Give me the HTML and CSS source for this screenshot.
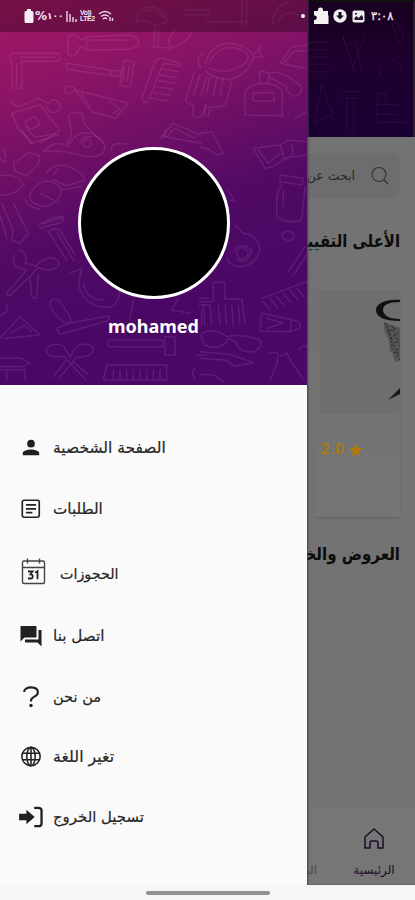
FILE: index.html
```html
<!DOCTYPE html>
<html lang="ar">
<head>
<meta charset="utf-8">
<meta name="viewport" content="width=device-width, initial-scale=1">
<title>mohamed</title>
<link rel="stylesheet" href="styles.css">
</head>
<body>
<div class="screen">
  <main class="page">
    <header class="page-header">
      <svg class="page-doodles" viewBox="0 0 324 402" fill="none" stroke="#a060c8" stroke-opacity=".12" stroke-width="3">
        <path d="M8 120h60M8 142h70M8 165h60M8 188h65M8 210h60M110 100l35 110M145 100l20 100M180 95l-45 110M110 100q10 50 30 15M260 60l20 60q20 10 15-20l-25-50M230 180q-20 40 10 60M250 170q30 0 40 40M45 250l35 90-55 20zM100 270h65M100 290h65M122 290v105M143 290v105M215 275v90h90M215 275h25v15h-20M215 310h60M215 340h60"/>
      </svg>
    </header>
    <div class="search">
      <svg class="search-icon" viewBox="0 0 20 20" fill="none" stroke="#303030" stroke-width="1.1"><circle cx="9" cy="8.5" r="7"/><path d="m14 14 4 4"/></svg>
      <span class="search-text">ابحث عن</span>
    </div>
    <h2 class="title">الأعلى التقييم</h2>
    <section class="card">
      <div class="photo">
        <svg viewBox="0 0 80 121" fill="none">
          <path d="M80 10C65 9 56 14 56 20c0 7 8 11 24 11v-2c-13 0-17-5-17-9 0-5 5-8 17-8z" fill="#111"/>
          <path d="M64 32l16 6v33l-5 1-2-7-3-4-1-11-5-10z" fill="#555"/>
          <path d="m65 33 14 33M68 35l4 22 8 13M72 36l7 20M67 42l9-4M70 49l9-7M72 56l8-8M74 63l6-6" stroke="#292929" stroke-dasharray="2 2"/>
          <path d="M80 98 68 110l12-6z" fill="#191919"/>
        </svg>
      </div>
      <div class="rating"><span>2.0</span><svg viewBox="0 0 24 24"><path fill="#b07b08" d="m12 1 3.400 7.300 8.100.9-6 5.400 1.700 7.900L12 18.500l-7.200 4 1.700-7.900-6-5.400 8.100-.9z"/></svg></div>
    </section>
    <h2 class="title title-offers">العروض والخصومات</h2>
    <nav class="tabs">
      <div class="tab">
        <svg viewBox="0 0 22 22" fill="none" stroke="#1c0c29" stroke-width="1.5" stroke-linejoin="round"><path d="M2 20V9l9-8 9 8v11h-5v-5q0-2-2-2H9q-2 0-2 2v5z"/></svg>
        <span class="tab-label">الرئيسية</span>
      </div>
      <div class="tab tab-next"><span class="tab-label">الطلبات</span></div>
    </nav>
  </main>

  <aside class="drawer">
    <div class="profile">
      <svg class="doodles" viewBox="0 0 921 1155" fill="none" stroke="#d28ae0" stroke-opacity=".15" stroke-width="4.500" stroke-linejoin="round" stroke-linecap="round">
        <g>
          <path d="M410 65q-5-45 45-45 35 3 45 45l-30 15q-25-25-60-15M430 35q40-20 60 20M555 30h75M555 45h75"/>
          <path d="M205 110q15-8 28 0l15 10 15-10 120-5q35 5 32 25-3 15-35 18l-115 3-25-12-12 25q-12 8-24 0zM260 112v36M270 120h115M465 85l-4 55 50 5q55-20 62-45M475 90v45M510 140q-10-35 20-50"/>
          <path d="M35 160h140q10 10 0 24H65v80H37v-75q-15-10-2-29M50 190v65M60 172h105"/>
          <path d="m200 190 130 20q10 10-5 16l-125-18zM330 212h30v15h-30M370 185q15-8 32 2l-10 70q-15 8-32-2zM373 200l-5 45M387 200l-5 45"/>
          <path d="M465 185q10-15 30-8l50 15M465 185l-40 110q0 12 15 12M490 190l-45 110M490 190l52 8M486 207l50 8M480 225l50 8M475 242l50 8M468 260l50 8M462 278l48 8M455 295l45 8"/>
          <path d="M610 160q-30 20-5 45M582 220l-25 80q0 12 25 14l-5 30q15 18 30 0l12-30M600 225l-20 60M620 230l-18 60"/>
          <path d="M192 268q15-20 35 0-10 15-30 10zM225 270l160 40-38 45-72-20zM245 280l25 40M330 305l30 20-20 15M35 300q10 30 45 10l35-15 30 15q10-18 30-5 15 20-5 30-25 8-30-15M35 340l20 45 40 45M35 340l85-25 60 75-60 40M75 365l30-15 15 22-25 15q-18 0-20-22"/>
          <path d="M205 345q15-10 40-5l10 35 55 55M205 345l10 60-15 25M485 410l35-40 80 35M500 410l25-25 60 30"/>
        </g>
        <g transform="translate(615)">
          <path d="M110 0v75M125 0v75M0 65h125M205 70q-5-45 40-60M220 65q20-40 60-20M0 190q20-60 75-60 50 5 70 35l20-25-3 18 12 14-27-3q-20 60-75 70-45-2-72-27M15 185q35-65 105-30 25 25-15 45-45 25-90 5"/>
          <path d="M15 230l-10 50M35 235l-10 50M55 235l-10 50M80 245l-18 65q-5 15-55 10M0 320v30M15 325l-5 25M120 345v-70q15-25 60-25 50 5 52 30v67zM145 278h62v25h-62zM165 250l-2-32q20-10 30 10l-5 20M190 220q25-10 60 10l40 30q0 28-25 28-20-10-22-30l-50-25M225 190l35-50 45-5M240 185l28-32h35M225 190l75 15M270 355l35-20"/>
        </g>
        <g transform="translate(0 390)">
          <path d="M65 0l30 40 80-25M85 0l20 22 60-10M130 65q35-40 75-15 20-50 70-40 55 30 35 55-20 25-80 8-50-15-100-8M250 40a12 12 0 1 0 24 0 12 12 0 1 0-24 0M240 40q5-25 35-20M335 60q-5-25 45-18M480 25q15 0 15-25M495 20l110 20"/>
          <path d="m60 85 25-17 35 10-5 25-35 35-35-15-5-25zM0 85q25 30 12-30M0 195q40 5 70-30-15-35-70-28M140 130q10-25 50-25 55 15 65 45l-55 18-40-18M160 135l15-20M90 195q10-35 50-43 35 5 45 30-5 35-50 48-50-10-45-35M75 207q5 25 45 30M120 190l40 20M190 180l55-12"/>
          <path d="M5 220l35 80-5 30 25 10 25-30-45-90M0 255l20 70M115 285l40-20 35-7q5 10-10 20l-60 17M130 280l60-18M145 305q15-15 35-5l45 75M145 305l55 85M170 305l50 85"/>
        </g>
        <g transform="translate(0 765)">
          <path d="M45 0q-15 30 15 40l20 5L20 115q5 12 15 3l65-65 15-15q40 15 60-5 5-20-20-25-30 0-45 25L75 25Q85-5 60-15M90 65l5 60q10 10 15 0l5-65M210 55l35-15-5 25q-10 20 5 50 30 50 90 40 25-15 25-55M250 85q10 50 60 50M150 140q15-15 30 0l30 45q5 20-10 20-20-5-50-50zM170 220l10 18 140-40q15-10 5-15l-110 20zM0 250l60-65 60 55-105 10M30 235l45-25 20 20M0 180q30-10 20-30M0 310h65l25 15-20 10H0M0 345h75v30M20 345v30"/>
          <path d="M140 280q20-20 50-8l20 35q20-50 60-38 15 10 5 25-15 15-45 12L175 372M140 280q-5 22 30 26l20-3 65 70M200 315l-40 50M220 320l45 40M328 255h160v20H328q-10-10 0-20M495 245h30v55h-30zM320 330h180v45H310zM340 345v30M360 345v30M380 345v30M400 345v30M420 345v30M440 345v30M460 345v30M480 345v30M595 130h30M597 150h30M605 165v45M535 130l-20 35 55 10M400 135l-10 55M590 300h35M585 340q-15 15 0 30"/>
        </g>
        <g transform="translate(600 390)">
          <path d="M0 10l35-5 35 65q-20 10-40-10L0 50M160 55l80-10 25-15 55 5M160 55l35 60q35-3 55-30l70-10M175 60l30 40 35-30M240 45l15 45 25-18-5-30M240 135l70 10-5 20-65-10zM245 165q-15 20-15 50v45q35 25 75 10l10-100M250 180v50M85 180l20 35-15-5"/>
        </g>
        <g transform="translate(600 750)">
          <path d="M105-75l25 25q45 5 50 50-10 45-60 50-35-5-40-25M110 10a17 17 0 1 0 34 0 17 17 0 1 0-34 0M100 5q20-35 55-5-10 45-45 30M245-45q10-15 30-10 15 15 0 25-25 5-30-15M265 65l50-75M280 75l40-60M0 155h40V97h35v50h50l10 75M10 165l5 60M30 165l5 60M55 165l5 60M75 165l5 60M95 165l5 60M115 165l5 60M185 145l135-50M190 155l20 25M210 145l22 28M230 140l22 25M250 130l22 25M270 122l22 25M290 115l22 25"/>
          <path d="M185 190l95 20q25 5 20 25l-30 10-90-2zM200 205l50 15-50 15M275 210l-5 35M5 250q40-20 75 10 45-10 100 10 10 25-20 35-40 5-55-30l-20-10Q70 300 25 290 0 280 5 250M0 305l90 8 70 25-55 10-30-18-75-5M210 310q15-8 25 5l-5 30-20 45M240 320l20-12 15 30 35 50M0 375q40-10 70 20M300 300q5-18 20-10"/>
        </g>
      </svg>
      <div class="avatar"></div>
      <div class="name">mohamed</div>
    </div>
    <nav class="menu">
      <a class="item"><svg class="ic" viewBox="0 0 24 24"><path fill="#202020" d="M12 11.500a4.200 4.200 0 1 0 0-8.400 4.200 4.200 0 0 0 0 8.400zm0 2.200c-3.500 0-9 1.300-9 4V20h18v-2.300c0-2.700-5.500-4-9-4z"/></svg><span class="label l1">الصفحة الشخصية</span></a>
      <a class="item"><svg class="ic" viewBox="0 0 24 24" fill="none" stroke="#222" stroke-width="1.800"><rect x="2.500" y="2.500" width="18.500" height="18.500" rx="1.800"/><path d="M6.500 7.500h11M6.500 11.800h11M6.500 16h7"/></svg><span class="label l2">الطلبات</span></a>
      <a class="item item-calendar"><svg class="ic" viewBox="0 0 26 28" fill="none" stroke="#444" stroke-width="1.400"><rect x="2.500" y="4" width="22" height="22.500" rx="1.500"/><path d="M2.500 10.500h22M7.500 1.500v5M19.500 1.500v5"/><path stroke-width="1.800" stroke="#222" d="M8 14.500h4.500l-2 2.800c3 0 3 4.200 0 4.200H8M15 15.500l2.500-1.200v8"/></svg><span class="label l3">الحجوزات</span></a>
      <a class="item"><svg class="ic ic-chat" viewBox="1 1 22 22"><path fill="#202020" d="M22 6h-2.500v9.500H6V17.500c0 .55.45 1 1 1h11.500l4 4V7c0-.55 0-1-.5-1zm-4.500 6.500V3c0-.55-.45-1-1-1H2.500c-.55 0-1 .45-1 1v14.500l4-4h11c.55 0 1-.45 1-1z"/></svg><span class="label l4">اتصل بنا</span></a>
      <a class="item"><svg class="ic" viewBox="0 0 24 24" fill="none" stroke="#202020" stroke-width="2.300"><path d="M4.500 6.500C4.500 3.500 8 1.500 12 1.500c5 0 7.500 2.200 7.500 5.500 0 4.800-7.500 4.500-7.500 9V17"/><circle cx="12" cy="21.300" r="1.900" fill="#202020" stroke="none"/></svg><span class="label l5">من نحن</span></a>
      <a class="item"><svg class="ic" viewBox="0 0 24 24" fill="none" stroke="#222" stroke-width="1.700"><circle cx="12" cy="11.500" r="10"/><ellipse cx="12" cy="11.500" rx="4.600" ry="10"/><path d="M3 8h18M3 15h18M12 1.500v20"/></svg><span class="label l6">تغير اللغة</span></a>
      <a class="item"><svg class="ic ic-exit" viewBox="0 0 28 24"><path fill="#202020" d="M1 8.500h8V4l9 8-9 8v-4.500H1z"/><path fill="none" stroke="#202020" stroke-width="2.500" d="M17.500 2h4.500q3.500 0 3.500 3v14q0 3-3.500 3h-4.500"/></svg><span class="label l7">تسجيل الخروج</span></a>
    </nav>
  </aside>

  <div class="status">
    <div class="status-left">
      <svg class="battery" viewBox="0 0 10 14"><path fill="#f8edf4" d="M3 0h4v2h1q1.500 0 1.500 1.500v9Q9.500 14 8 14H2Q.5 14 .5 12.500v-9Q.5 2 2 2h1z"/></svg>
      <span class="percent">%<span class="hundred">١٠٠</span></span>
      <svg class="signal" viewBox="0 0 11 12" stroke="#e6c9d9" stroke-width="1.500"><path d="M1 1v11M4 4v8M7 7v5M10 9v3"/></svg>
      <span class="lte"><span>Vo))</span><span>LTE2</span></span>
      <svg class="wifi" viewBox="0 0 16 12" fill="none" stroke="#eed6e3" stroke-width="1.400"><path d="M1 4q6-5 12 0M3 6.500q4-3 8 0M5 9q2-2 4 0M12 7v4M14.500 8v3"/></svg>
    </div>
    <i class="dot"></i>
    <div class="status-right">
      <svg class="puzzle" viewBox="0 0 16 18"><path fill="#f2f2f2" d="M1 4h4V3a2.500 2.500 0 0 1 5 0v1h5v4.500h.5V17H1v-4h1a2.300 2.300 0 0 0 0-4.500H1z"/></svg>
      <svg class="disc" viewBox="0 0 14 14"><circle cx="7" cy="7" r="6.700" fill="#f2f2f2"/><path fill="#180820" d="m7 10.500-4-4h2.500V3h3v3.500H11z"/></svg>
      <svg class="image" viewBox="0 0 13 13"><rect x=".5" y=".5" width="12" height="12" rx="2" fill="#eee"/><path fill="#26152f" d="M2.500 10V8l2-2 2 2 3-3 1.500 2v3zM3 3h2v1.500H3z"/></svg>
      <span class="time">٣:٠٨</span>
    </div>
  </div>
  <footer class="gesture"><i></i></footer>
</div>
</body>
</html>
```
FILE: styles.css
```css
* { box-sizing: border-box; }
body { margin: 0; font-family: "DejaVu Sans", sans-serif; }
svg { display: block; flex: none; }
i { display: block; }

.screen { position: relative; width: 415px; height: 900px; overflow: hidden; background: #f6f6f6; }

.page {
  display: flex; flex-direction: column; direction: rtl;
  height: 885px; margin-left: 307px; padding: 0 15px 0 0;
  background: #737373; overflow: hidden; white-space: nowrap;
  border-bottom: 1px solid #686868;
}
.page-header { flex: none; height: 137px; margin-right: -15px; background: linear-gradient(#19001f, #1d002e 45%, #1b0034); border-top: 2px solid #111; border-right: 2px solid #28202c; }
.page-doodles { width: 106px; height: 134px; }
.search { display: flex; flex: none; align-items: center; gap: 15px; height: 45px; margin-top: 16px; padding-right: 10px; background: #6d6d6d; border-radius: 0 6px 6px 0; }
.search-icon { width: 20px; height: 20px; }
.search-text { font-size: 12.5px; color: #282828; }
.title { flex: none; height: 30px; margin: 28px 0 0; font-size: 17.5px; line-height: 30px; color: #0c0c0c; transform: scaleX(.85); transform-origin: right center; }
.card { flex: none; width: 85px; height: 227px; margin-top: 34px; padding-left: 5px; background: linear-gradient(#707070, #757575); box-shadow: 0 2px 3px -1px #606060; }
.photo { width: 80px; height: 124px; overflow: hidden; background: #6e6e6e; border-radius: 4px; }
.photo svg { width: 80px; height: 121px; }
.rating { display: flex; align-items: center; gap: 4px; direction: ltr; height: 20px; margin-top: 25px; padding-left: 1px; font: 500 15.5px/20px Roboto, sans-serif; letter-spacing: .6px; color: #b07b08; }
.rating svg { width: 14px; height: 14px; margin-top: 1px; }
.title-offers { margin-top: 22px; transform: scaleX(.86); }
.tabs { display: flex; flex: none; height: 77px; margin-top: auto; margin-right: -15px; background: #767676; }
.tab { display: flex; flex: none; flex-direction: column; align-items: center; width: 82px; padding-top: 21px; }
.tab svg { width: 22px; height: 22px; }
.tab-label { margin-top: 11px; font-size: 12px; line-height: 18px; color: #1c0c29; }
.tab-next { align-items: flex-start; padding-right: 16px; padding-top: 43px; }
.tab-next .tab-label { color: #4b4b4b; }

.drawer { position: absolute; top: 0; left: 0; width: 307px; height: 885px; background: #fafafa; box-shadow: 1px 0 2px #444; }
.profile {
  position: relative; display: flex; flex-direction: column; align-items: center;
  height: 385px; padding-top: 147px; overflow: hidden;
  background: linear-gradient(163deg, #a41762 0%, #901566 18%, #701065 37%, #500a65 55%, #4a0864 75%, #4b0867 100%);
}
.doodles { position: absolute; inset: 0; width: 307px; height: 385px; }
.avatar { position: relative; width: 152px; height: 152px; border: 3px solid #fff; border-radius: 50%; background: #000; }
.name { position: relative; margin-top: 15px; font: 700 18px/24px "Noto Sans", sans-serif; color: #fff; }

.menu { display: grid; grid-template-rows: 60px 61px 67px 60px 61px 60px 60px; padding-top: 33px; }
.item { display: flex; align-items: center; padding-left: 20px; gap: 11px; color: #262626; direction: ltr; }
.ic { width: 22px; height: 22px; }
.item-calendar .ic { width: 26px; height: 28px; margin-top: -3px; }
.item-calendar { gap: 14px; }
.item-calendar .label { margin-top: 3px; }
.ic-exit { width: 26px; margin: 0 -2px; }
.label { direction: rtl; font-size: 14px; line-height: 24px; white-space: nowrap; -webkit-text-stroke: .2px #262626; }
.l1 { font-size: 15.5px; }
.l2 { font-size: 15.2px; }
.l3 { font-size: 14.3px; }
.l4 { font-size: 15.2px; }
.l5 { font-size: 14.6px; }
.l6 { font-size: 15.8px; }
.l7 { font-size: 14.9px; }

.status { position: absolute; inset: 0 0 auto; display: flex; align-items: center; height: 32px; padding-left: 24px; color: #f2e6ee; white-space: nowrap; }
.status::before { content: ""; position: absolute; inset: 0 108px 0 0; background: rgba(0, 0, 0, .29); }
.status > * { position: relative; }
.status-left { display: flex; align-items: center; width: 276px; }
.battery { width: 10px; height: 14px; }
.percent { display: flex; align-items: center; width: 27px; margin-left: 1px; font-size: 12px; font-weight: bold; direction: ltr; }
.hundred { font-size: 9px; }
.signal { width: 11px; height: 12px; margin-left: 4px; }
.lte { display: flex; flex-direction: column; width: 15px; margin-left: 3px; font: 700 7px/6px "Liberation Sans", sans-serif; letter-spacing: -.5px; }
.wifi { width: 16px; height: 12px; margin-left: 3px; }
.dot { width: 4px; height: 4px; margin-left: 1px; border-radius: 50%; background: #fff; }
.status-right { display: flex; align-items: center; margin-left: 8px; }
.puzzle { width: 16px; height: 18px; }
.disc { width: 14px; height: 14px; margin-left: 4px; }
.image { width: 13px; height: 13px; margin-left: 5px; }
.time { margin-left: 6px; font-size: 11.5px; direction: ltr; -webkit-text-stroke: .3px #f2e6ee; }

.gesture { position: absolute; inset: 885px 0 0; display: flex; justify-content: center; padding-top: 6px; background: #f6f6f6; }
.gesture i { width: 124px; height: 4px; border-radius: 2px; background: #929292; }
```
